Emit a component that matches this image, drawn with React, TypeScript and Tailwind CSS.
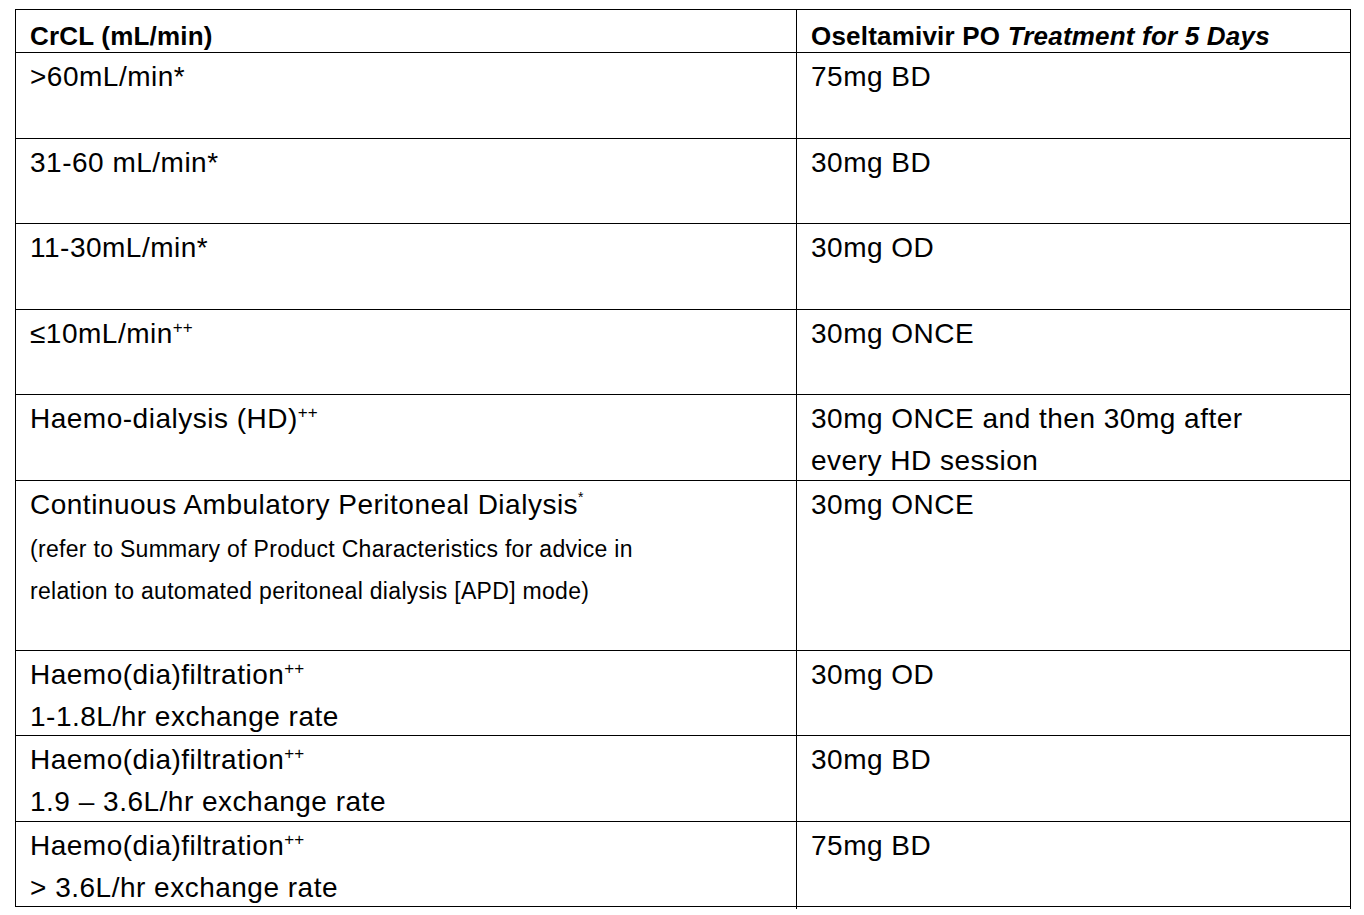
import React from "react";

const font = { fontFamily: '"Liberation Sans", Arial, sans-serif' };

function Sup({ children, small }: { children: React.ReactNode; small?: boolean }) {
  return (
    <span
      className={small ? "text-[14px] tracking-normal" : "text-[17px] tracking-normal"}
      style={{ verticalAlign: small ? "12px" : "10px", lineHeight: 0 }}
    >
      {children}
    </span>
  );
}

type Row = { h: string; left: React.ReactNode; right: React.ReactNode };

const rows: Row[] = [
  { h: "h-[86px]", left: <div>&gt;60mL/min*</div>, right: <div>75mg BD</div> },
  { h: "h-[85px]", left: <div>31-60 mL/min*</div>, right: <div>30mg BD</div> },
  { h: "h-[86px]", left: <div>11-30mL/min*</div>, right: <div>30mg OD</div> },
  {
    h: "h-[85px]",
    left: (
      <div>
        ≤10mL/min<Sup>++</Sup>
      </div>
    ),
    right: <div>30mg ONCE</div>,
  },
  {
    h: "h-[86px]",
    left: (
      <div>
        Haemo-dialysis (HD)<Sup>++</Sup>
      </div>
    ),
    right: (
      <>
        <div>30mg ONCE and then 30mg after</div>
        <div>every HD session</div>
      </>
    ),
  },
  {
    h: "h-[170px]",
    left: (
      <>
        <div>
          Continuous Ambulatory Peritoneal Dialysis<Sup small>*</Sup>
        </div>
        <div className="pt-[2px] text-[23px] tracking-[0.3px]">(refer to Summary of Product Characteristics for advice in</div>
        <div className="text-[23px] tracking-[0.3px]">relation to automated peritoneal dialysis [APD] mode)</div>
      </>
    ),
    right: <div>30mg ONCE</div>,
  },
  {
    h: "h-[85px]",
    left: (
      <>
        <div>
          Haemo(dia)filtration<Sup>++</Sup>
        </div>
        <div>1-1.8L/hr exchange rate</div>
      </>
    ),
    right: <div>30mg OD</div>,
  },
  {
    h: "h-[86px]",
    left: (
      <>
        <div>
          Haemo(dia)filtration<Sup>++</Sup>
        </div>
        <div>1.9 – 3.6L/hr exchange rate</div>
      </>
    ),
    right: <div>30mg BD</div>,
  },
  {
    h: "h-[85px]",
    left: (
      <>
        <div>
          Haemo(dia)filtration<Sup>++</Sup>
        </div>
        <div>&gt; 3.6L/hr exchange rate</div>
      </>
    ),
    right: <div>75mg BD</div>,
  },
];

export default function App() {
  return (
    <div className="min-h-[915px] w-full bg-white pt-[9px] pl-[15px] text-black" style={font}>
      <div className="w-[1336px] border-l border-t border-black">
        <div className="grid h-[43px] grid-cols-[781px_554px] border-b border-black">
          <div className="border-r border-black pl-[14px] pt-[11px] text-[26px] font-bold leading-[30px] tracking-[0.2px]">
            CrCL (mL/min)
          </div>
          <div className="border-r border-black pl-[14px] pt-[11px] text-[26px] font-bold leading-[30px] tracking-[0.2px]">
            Oseltamivir PO <span className="italic">Treatment for 5 Days</span>
          </div>
        </div>
        {rows.map((r, i) => (
          <div key={i} className={`grid ${r.h} grid-cols-[781px_554px] border-b border-black`}>
            <div className="border-r border-black pl-[14px] pt-[3px] text-[28px] leading-[42px] tracking-[0.5px]">
              {r.left}
            </div>
            <div className="border-r border-black pl-[14px] pt-[3px] text-[28px] leading-[42px] tracking-[0.5px]">
              {r.right}
            </div>
          </div>
        ))}
      </div>
    </div>
  );
}
